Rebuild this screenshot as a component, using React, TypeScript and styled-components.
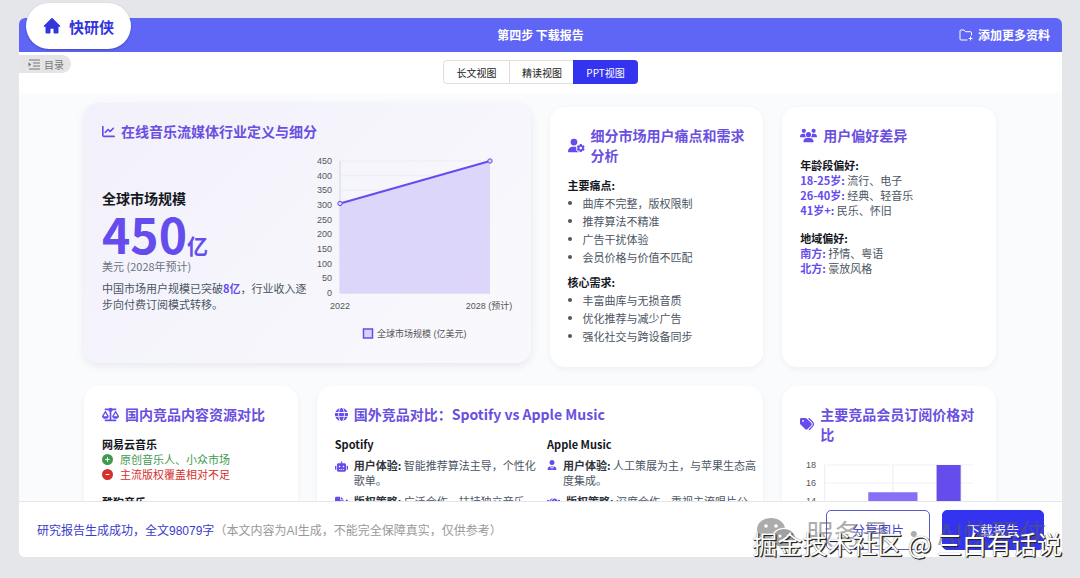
import React from 'react';
import styled, { createGlobalStyle, css } from 'styled-components';
import {
  FaChartLine, FaUserGear, FaUsers, FaScaleBalanced, FaGlobe, FaRobot, FaUserTie,
  FaTags, FaCirclePlus, FaCircleMinus, FaHandshake, FaFileSignature,
} from 'react-icons/fa6';

const violet = '#654cec';
const titleViolet = '#6b4fe0';

const GlobalStyle = createGlobalStyle`
  * { box-sizing: border-box; }
  body {
    margin: 0;
    background: #e5e6ea;
    font-family: "Noto Sans CJK SC", sans-serif;
    color: #4b5563;
  }
  h1, h2, h3, p, ul { margin: 0; padding: 0; }
  button { font-family: inherit; cursor: pointer; }
`;

const Page = styled.div`
  position: relative;
  height: 100vh;
  padding: 18px 18px 21px 19px;
  display: flex;
  flex-direction: column;
`;

const Shell = styled.main`
  flex: 1;
  min-height: 0;
  display: flex;
  flex-direction: column;
  border-radius: 6px;
  background: #fff;
`;

const Header = styled.header`
  flex: none;
  height: 34px;
  display: grid;
  grid-template-columns: 1fr auto 1fr;
  align-items: center;
  padding: 0 7px;
  background: #5f66f6;
  border-radius: 6px 6px 0 0;
  color: #fff;
`;

const Brand = styled.a`
  justify-self: start;
  display: flex;
  align-items: center;
  gap: 8px;
  height: 46px;
  margin-top: -18px;
  padding: 0 17px;
  border-radius: 23px;
  background: #fff;
  color: #3436dc;
  box-shadow: 0 1px 2px rgba(30, 30, 120, 0.4);
  font-size: 15px;
  font-weight: 700;
  text-decoration: none;
`;

const Step = styled.h1`
  font-size: 12px;
  line-height: 18px;
  font-weight: 700;
`;

const AddMore = styled.button`
  justify-self: end;
  display: flex;
  align-items: center;
  gap: 5px;
  padding: 0 5px;
  border: 0;
  background: none;
  color: #fff;
  font-size: 12px;
  line-height: 18px;
  font-weight: 700;
`;

const ViewBar = styled.div`
  flex: none;
  height: 41px;
  display: grid;
  grid-template-columns: 1fr auto 1fr;
  align-items: start;
`;

const Toc = styled.button`
  justify-self: start;
  display: flex;
  align-items: center;
  gap: 4px;
  height: 18px;
  margin-top: 3px;
  padding: 0 7px 0 9px;
  border: 0;
  border-radius: 0 9px 9px 0;
  background: #e5e5e8;
  color: #777;
  font-size: 10px;
`;

const Segments = styled.div`
  display: flex;
  margin-top: 8px;
  border: 1px solid #dedee2;
  border-radius: 4px;
`;

const Segment = styled.button<{ $active?: boolean }>`
  width: 65px;
  height: 22px;
  padding: 0;
  border: 0;
  background: #fff;
  color: #222;
  font-size: 10px;
  border-radius: 4px;
  & + & { border-left: 1px solid #dedee2; border-radius: 0; }
  ${p => p.$active && css`
    && { margin: -1px; height: 24px; background: #3434f0; color: #fff; border: 0; border-radius: 0 4px 4px 0; }
  `}
`;

const Board = styled.section`
  flex: 1;
  min-height: 0;
  overflow: hidden;
  padding: 10px 66px 0 65px;
  background: #fafbfd;
`;

const Grid = styled.div`
  display: grid;
  grid-template-columns: repeat(4, minmax(0, 1fr));
  column-gap: 19px;
  row-gap: 15px;
`;

const Card = styled.article<{ $span?: number; $tinted?: boolean }>`
  grid-column: span ${p => p.$span ?? 1};
  min-height: 260px;
  margin-top: ${p => (p.$tinted ? 0 : 4)}px;
  margin-bottom: ${p => (p.$tinted ? 4 : 0)}px;
  padding: 18px 18px 16px;
  border-radius: 15px;
  background: ${p => (p.$tinted ? 'linear-gradient(135deg, #f2f1fb, #f9f9fd)' : '#fff')};
  box-shadow: ${p => (p.$tinted ? '0 3px 8px rgba(40, 40, 80, 0.09)' : '0 2px 6px rgba(40, 40, 80, 0.05)')};
`;

const Title = styled.h2`
  display: flex;
  align-items: center;
  gap: 6px;
  margin-bottom: 12px;
  color: ${titleViolet};
  font-size: 14px;
  line-height: 20px;
  font-weight: 700;
  svg { flex: none; color: ${violet}; }
`;

const MarketBody = styled.div`
  display: grid;
  grid-template-columns: minmax(0, 1fr) 200px;
  gap: 4px;
  align-items: center;
`;

const Strong = styled.strong`
  color: ${violet};
  font-weight: 700;
`;

const StatLabel = styled.h3`
  color: #15171e;
  font-size: 14px;
  line-height: 20px;
  font-weight: 700;
`;

const Figure = styled.p`
  height: 50px;
  color: ${violet};
  font-size: 48px;
  line-height: 50px;
  font-weight: 700;
  small { font-size: 21px; line-height: 20px; }
`;

const Unit = styled.p`
  font-size: 11px;
  line-height: 16px;
  color: #6b7280;
`;

const Note = styled.p`
  margin-top: 6px;
  font-size: 11px;
  line-height: 16px;
`;

const Chart = styled.svg`
  display: block;
  width: 100%;
  height: auto;
  font-family: "Liberation Sans", "Noto Sans CJK SC", sans-serif;
  font-size: 9px;
  fill: #555;
`;

const SubTitle = styled.h3`
  color: #15171e;
  font-size: 11px;
  line-height: 16px;
  font-weight: 700;
`;

const Bullets = styled.ul`
  list-style: none;
  margin: 1px 0 8px;
  font-size: 11px;
  line-height: 18px;
  &:last-child { margin-bottom: 0; }
  li { display: flex; align-items: center; gap: 11px; }
  li::before { content: ""; width: 4px; height: 4px; border-radius: 50%; background: #4b5563; }
`;

const Pairs = styled.div`
  margin-bottom: 12px;
  font-size: 11px;
  line-height: 15px;
`;

const Verdict = styled.p<{ $good?: boolean }>`
  display: flex;
  align-items: center;
  gap: 7px;
  color: ${p => (p.$good ? '#3f9a50' : '#d2302f')};
`;

const Rivals = styled.div`
  display: grid;
  grid-template-columns: minmax(0, 35fr) minmax(0, 36fr);
  column-gap: 4px;
  margin-right: -16px;
`;

const Feature = styled.div`
  display: flex;
  gap: 6px;
  margin-top: 6px;
  font-size: 11px;
  line-height: 15px;
  svg { flex: none; margin-top: 2px; color: ${violet}; }
  b { color: #30343c; }
`;

const Footer = styled.footer`
  flex: none;
  height: 56px;
  display: flex;
  align-items: center;
  gap: 12px;
  padding: 0 18px;
  border-top: 1px solid #e4e6eb;
  border-radius: 0 0 6px 6px;
  background: #fff;
`;

const Status = styled.p`
  flex: 1;
  color: #999;
  font-family: "Liberation Sans", "Noto Sans CJK SC", sans-serif;
  font-size: 12px;
  span { color: #3b3bcb; }
`;

const Action = styled.button<{ $primary?: boolean }>`
  width: ${p => (p.$primary ? 102 : 104)}px;
  height: 40px;
  border: 1px solid ${p => (p.$primary ? '#3434f0' : '#5b5bc8')};
  border-radius: 5px;
  background: ${p => (p.$primary ? '#3434f0' : '#fff')};
  color: ${p => (p.$primary ? '#fff' : '#4545cf')};
  font-size: 13px;
`;

const AccountMark = styled.div`
  position: absolute;
  right: 33px;
  bottom: 28px;
  display: flex;
  align-items: center;
  gap: 10px;
  color: rgba(90, 90, 90, 0.5);
  font-size: 28px;
  line-height: 34px;
  white-space: nowrap;
  pointer-events: none;
`;

const CommunityMark = styled.div`
  position: absolute;
  right: 18px;
  bottom: 18px;
  color: #fff;
  font-size: 25px;
  line-height: 34px;
  white-space: nowrap;
  text-shadow: 1px 1px 1px #222, 1px 1px 0 #333, 0 0 1px #777;
  pointer-events: none;
`;

const HomeIcon = () => (
  <svg width="18" height="18" viewBox="0 0 18 18" fill="currentColor" aria-hidden="true">
    <path d="M9 1.2 17 9.2H15V16H11V11.2H7V16H3V9.2H1Z" stroke="currentColor" strokeWidth="1" strokeLinejoin="round" />
  </svg>
);

const FolderIcon = () => (
  <svg width="14" height="14" viewBox="0 0 14 14" fill="none" stroke="currentColor" strokeLinecap="round" strokeLinejoin="round" aria-hidden="true">
    <path d="M8 12H2Q1 12 1 11V3Q1 2 2 2H5L6.5 3.7H11.5Q12.5 3.7 12.5 4.7V7M11.5 9V12M10 10.5H13" />
  </svg>
);

const TocIcon = () => (
  <svg width="12" height="11" viewBox="0 0 12 11" fill="none" stroke="currentColor" aria-hidden="true">
    <path d="M1 1H12M5 4H12M5 7H12M1 10H12" />
    <path d="M0.5 3.2 3.2 5.5 0.5 7.8Z" fill="currentColor" stroke="none" />
  </svg>
);

const ChatIcon = () => (
  <svg width="40" height="32" viewBox="0 0 40 32" aria-hidden="true">
    <path fill="#888" fillOpacity=".7" d="M15 1C7 1 1 6 1 12.500c0 3.600 2 6.700 5 8.800L5 26l5-3c2 .6 4 .9 6 .8-2-7 4-13 13-13C28 5 22 1 15 1Z" />
    <path fill="#888" fillOpacity=".8" d="M28 12c-6 0-11 4-11 9.200S22 30 28 30c1.300 0 2.600-.2 3.700-.5L35.500 31.500l-1-3.200c2.700-1.700 4.500-4.200 4.500-7.100C39 16 34 12 28 12Z" />
    <g fill="#fff"><circle cx="10" cy="9" r="1.800" /><circle cx="20" cy="9" r="1.800" /><circle cx="24" cy="19" r="1.500" /><circle cx="32" cy="19" r="1.500" /></g>
  </svg>
);

const ticks = [450, 400, 350, 300, 250, 200, 150, 100, 50, 0];

const MarketChart = () => (
  <Chart viewBox="-3 1 200 194" role="img" aria-label="全球市场规模">
    {ticks.map((t, i) => (
      <g key={t}>
        <text x="16" y={12 + i * 14.67} textAnchor="end">{t}</text>
        <path d={`M24 ${9 + i * 14.67}H174`} stroke="#ececf3" />
      </g>
    ))}
    <path d="M24 9V141H174" fill="none" stroke="#d5d5df" />
    <path d="M24 51.5 174 9V141H24Z" fill="#d9d2fa" fillOpacity=".88" />
    <path d="M24 51.5 174 9" stroke={violet} strokeWidth="2" />
    <circle cx="24" cy="51.5" r="2.2" fill="#d9d3fa" stroke={violet} />
    <circle cx="174" cy="9" r="2.2" fill="#d9d3fa" stroke={violet} />
    <text x="24" y="157" textAnchor="middle">2022</text>
    <text x="173" y="157" textAnchor="middle">2028 (预计)</text>
    <rect x="47.5" y="177" width="9" height="9" fill="#d9d3fa" stroke={violet} strokeWidth="1.5" />
    <text x="61" y="185">全球市场规模 (亿美元)</text>
  </Chart>
);

const PriceChart = () => (
  <Chart viewBox="0 0 177 120" role="img" aria-label="会员订阅价格">
    {[18, 16, 14, 12, 10].map((t, i) => (
      <g key={t}>
        <text x="16" y={12 + i * 18} textAnchor="end">{t}</text>
        <path d={`M24 ${9 + i * 18}H173`} stroke="#f2f2f5" />
      </g>
    ))}
    <path d="M24.5 9V120M92.5 9V120M160.5 9V120" stroke="#eeeef2" />
    <path d="M68 36H117V120H68Z" fill="#8770f5" />
    <path d="M136 9H160V120H136Z" fill={violet} />
  </Chart>
);

export default function App() {
  return (
    <Page>
      <GlobalStyle />
      <Shell>
        <Header>
          <Brand href="#"><HomeIcon />快研侠</Brand>
          <Step>第四步 下载报告</Step>
          <AddMore><FolderIcon />添加更多资料</AddMore>
        </Header>
        <ViewBar>
          <Toc><TocIcon />目录</Toc>
          <Segments>
            <Segment>长文视图</Segment>
            <Segment>精读视图</Segment>
            <Segment $active>PPT视图</Segment>
          </Segments>
        </ViewBar>
        <Board>
          <Grid>
            <Card $span={2} $tinted>
              <Title><FaChartLine size={13} />在线音乐流媒体行业定义与细分</Title>
              <MarketBody>
                <div>
                  <StatLabel>全球市场规模</StatLabel>
                  <Figure>450<small>亿</small></Figure>
                  <Unit>美元 (2028年预计)</Unit>
                  <Note>中国市场用户规模已突破<Strong>8亿</Strong>，行业收入逐步向付费订阅模式转移。</Note>
                </div>
                <MarketChart />
              </MarketBody>
            </Card>
            <Card>
              <Title><FaUserGear size={17} />细分市场用户痛点和需求分析</Title>
              <SubTitle>主要痛点:</SubTitle>
              <Bullets>
                <li>曲库不完整，版权限制</li>
                <li>推荐算法不精准</li>
                <li>广告干扰体验</li>
                <li>会员价格与价值不匹配</li>
              </Bullets>
              <SubTitle>核心需求:</SubTitle>
              <Bullets>
                <li>丰富曲库与无损音质</li>
                <li>优化推荐与减少广告</li>
                <li>强化社交与跨设备同步</li>
              </Bullets>
            </Card>
            <Card>
              <Title><FaUsers size={17} />用户偏好差异</Title>
              <SubTitle>年龄段偏好:</SubTitle>
              <Pairs>
                <p><Strong>18-25岁:</Strong> 流行、电子</p>
                <p><Strong>26-40岁:</Strong> 经典、轻音乐</p>
                <p><Strong>41岁+:</Strong> 民乐、怀旧</p>
              </Pairs>
              <SubTitle>地域偏好:</SubTitle>
              <Pairs>
                <p><Strong>南方:</Strong> 抒情、粤语</p>
                <p><Strong>北方:</Strong> 豪放风格</p>
              </Pairs>
            </Card>
            <Card>
              <Title><FaScaleBalanced size={17} />国内竞品内容资源对比</Title>
              <SubTitle>网易云音乐</SubTitle>
              <Pairs>
                <Verdict $good><FaCirclePlus />原创音乐人、小众市场</Verdict>
                <Verdict><FaCircleMinus />主流版权覆盖相对不足</Verdict>
              </Pairs>
              <SubTitle>酷狗音乐</SubTitle>
            </Card>
            <Card $span={2}>
              <Title><FaGlobe size={13} />国外竞品对比：Spotify vs Apple Music</Title>
              <Rivals>
                <div>
                  <SubTitle>Spotify</SubTitle>
                  <Feature><FaRobot size={13} /><p><b>用户体验:</b> 智能推荐算法主导，个性化歌单。</p></Feature>
                  <Feature><FaFileSignature size={13} /><p><b>版权策略:</b> 广泛合作，扶持独立音乐人。</p></Feature>
                </div>
                <div>
                  <SubTitle>Apple Music</SubTitle>
                  <Feature><FaUserTie size={10} /><p><b>用户体验:</b> 人工策展为主，与苹果生态高度集成。</p></Feature>
                  <Feature><FaHandshake size={13} /><p><b>版权策略:</b> 深度合作，重视主流唱片公司。</p></Feature>
                </div>
              </Rivals>
            </Card>
            <Card>
              <Title><FaTags size={14} />主要竞品会员订阅价格对比</Title>
              <PriceChart />
            </Card>
          </Grid>
        </Board>
        <Footer>
          <Status><span>研究报告生成成功，全文98079字</span>（本文内容为AI生成，不能完全保障真实，仅供参考）</Status>
          <Action>分享图片</Action>
          <Action $primary>下载报告</Action>
        </Footer>
      </Shell>
      <AccountMark><ChatIcon /><span>服务号</span><span>·</span><span>AI快研侠</span></AccountMark>
      <CommunityMark>掘金技术社区 @ 三白有话说</CommunityMark>
    </Page>
  );
}
